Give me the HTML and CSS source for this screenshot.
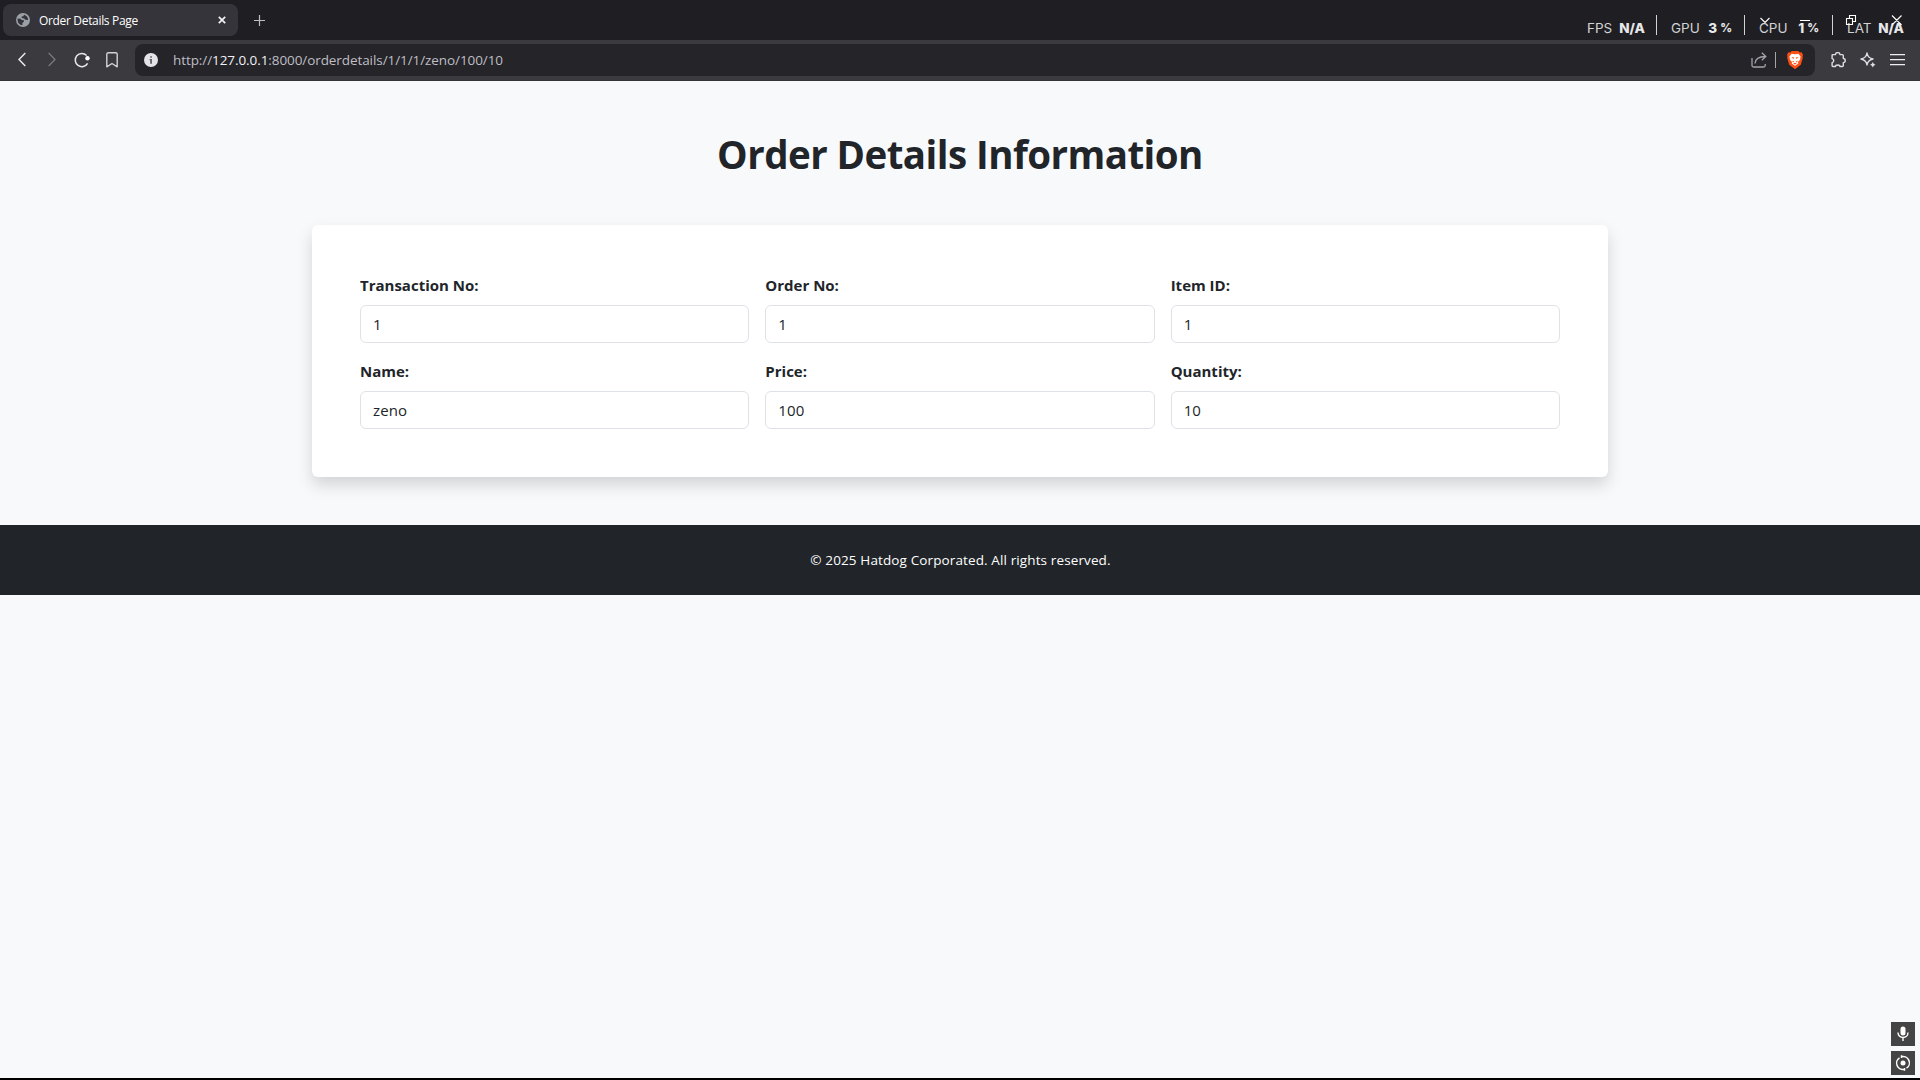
FILE: index.html
```html
<!DOCTYPE html>
<html lang="en">
<head>
<meta charset="utf-8">
<title>Order Details Page</title>
<link rel="stylesheet" href="styles.css">
</head>
<body>
<div class="window">
  <header class="tabstrip">
    <div class="tab">
      <svg class="globe" width="14" height="14" viewBox="0 0 14 14"><circle cx="7" cy="7" r="7" fill="#9aa0a6"/><path d="M1.6 5.6l3 .2 1.200 1.200 2 .3.2 1.500-1.600 1v2.400c-2.700-.2-4.700-2.300-4.800-5zM8 1.700l-.6 1.500-1.800.4.200 1.300 2.300.5 1.200 1.300 2.900.3c-.1-2.700-1.900-4.700-4.200-5.300z" fill="#35343a"/></svg>
      <span class="tab-title">Order Details Page</span>
      <svg class="tab-close" width="8" height="8" viewBox="0 0 8 8"><path d="M.8.8l6.400 6.400M7.200.8L.8 7.200" stroke="#f2f2f4" stroke-width="1.700"/></svg>
    </div>
    <svg class="new-tab" width="11" height="11" viewBox="0 0 11 11"><path d="M5.500 0v11M0 5.500h11" stroke="#bdbcc2" stroke-width="1.200"/></svg>
    <div class="stats">
      <div class="stat fps"><span>FPS</span><b>N/A</b></div>
      <div class="stat gpu"><span>GPU</span><b>3<small>%</small></b></div>
      <div class="stat cpu"><span>CPU</span><b>1<small>%</small></b></div>
      <div class="stat lat"><span>LAT</span><b>N/A</b></div>
    </div>
    <svg class="controls" width="144" height="14" viewBox="0 0 144 14" fill="none" stroke="#fff" stroke-width="1.100"><path d="M.5 5l4.500 4.500L9.500 5M40 7.500h10M86.500 5.500h6v6h-6zM89.500 5.500v-3h6v6h-3M132 2.500l9.500 9.500M141.500 2.500l-9.500 9.500"/></svg>
  </header>
  <nav class="toolbar">
    <div class="nav-icons">
      <svg width="8" height="15" viewBox="0 0 8 15" fill="none" stroke="#e8e7ec" stroke-width="1.500"><path d="M7.300 1L1 7.500 7.300 14"/></svg>
      <svg class="forward" width="8" height="15" viewBox="0 0 8 15" fill="none" stroke="#79787e" stroke-width="1.300"><path d="M.7 1L7 7.500.7 14"/></svg>
      <svg class="reload" width="16" height="16" viewBox="0 0 16 16" fill="none" stroke="#e8e7ec" stroke-width="1.500"><path d="M13.600 11.300A6.600 6.600 0 1 1 12.600 3.500"/><circle cx="13.500" cy="6.200" r="2.200" fill="#fff" stroke="none"/></svg>
      <svg class="bookmark" width="12" height="16" viewBox="0 0 12 16" fill="none" stroke="#d2d1d7" stroke-width="1.400"><path d="M.8 2.300Q.8.800 2.300.8h7.400q1.500 0 1.500 1.500v12.500L6 11.500.8 14.800z" stroke-linejoin="round"/></svg>
    </div>
    <div class="address">
      <svg class="info" width="14" height="14" viewBox="0 0 14 14"><circle cx="7" cy="7" r="7" fill="#e4e3e8"/><path d="M6.200 3.200h1.700v1.600H6.200zM5.600 6h2.300v4.800H6.200V7.200h-.6z" fill="#5a595f"/></svg>
      <span class="url">http://<b>127.0.0.1</b>:8000/orderdetails/1/1/1/zeno/100/10</span>
      <svg width="16" height="16" viewBox="0 0 16 16" fill="none" stroke="#a5a4aa" stroke-width="1.300"><path d="M1 6v7.500q0 1.500 1.500 1.500h10.200q1.500 0 1.500-1.500V12M4 11.500c.3-4.500 3.300-7 10.500-7M10.800.8l4 3.700-4 3.700"/></svg>
      <span class="rule"></span>
      <svg class="brave" width="16" height="18" viewBox="0 0 16 18"><path d="M4.700 0h6.600l1.500 1.500 1.700-.2L16 3.700l-.5 1.500.4 1.300-2.100 7.200L8.600 17.800q-.6.400-1.200 0L2.200 13.700.1 6.500l.4-1.300L0 3.700l1.500-2.400 1.700.2z" fill="#fb4f14"/><path d="M4.500 2.800l3.500.5 3.500-.5 2.200 3-.6 1.400.2 1.400-2.300 2.500.3 1.500L8 14.700l-3.300-2.100.3-1.500-2.300-2.500.2-1.400-.6-1.400z" fill="#fff"/><path d="M4.300 6l2.900.4-.7 1.700zM11.700 6l-2.900.4.700 1.700zM5.200 9.800l2.200.7-1.300 1.100zM10.800 9.800l-2.200.7 1.300 1.100zM6.100 12.500L8 11.700l1.900.8L8 13.500z" fill="#fb4f14"/></svg>
    </div>
    <div class="tools">
      <svg width="16" height="16" viewBox="0 0 16 16" fill="none" stroke="#dedde3" stroke-width="1.400" stroke-linejoin="round"><path d="M3 2.600h2.500a2.200 2 0 0 1 4.400 0h2.500q.9 0 .9.900v3a1.900 2 0 0 1 0 4.100v3q0 .9-.9.900H9.900a2.200 1.500 0 0 0-4.400 0H3q-.9 0-.9-.9v-3a2.100 2.100 0 0 0 0-4.100v-3q0-.9.9-.9z"/></svg>
      <svg width="16" height="16" viewBox="0 0 16 16" fill="none" stroke="#dedde3" stroke-width="1.400" stroke-linejoin="round"><path d="M7 1q.9 5.100 6 6-5.100.9-6 6Q6.100 7.900 1 7q5.100-.9 6-6z"/><path d="M12.800 10q.5 2.200 2.700 2.700-2.200.5-2.700 2.700-.5-2.200-2.700-2.700 2.200-.5 2.700-2.700z" fill="#dedde3"  stroke="none"/></svg>
      <svg width="15" height="12" viewBox="0 0 15 12"><path d="M0 0h15v1.200H0zM0 5h15v1.200H0zM0 10h15v1.200H0z" fill="#efeff2"/></svg>
    </div>
  </nav>
  <main class="page">
    <h1>Order Details Information</h1>
    <form class="card">
      <div class="field"><label>Transaction No:</label><div class="control">1</div></div>
      <div class="field"><label>Order No:</label><div class="control">1</div></div>
      <div class="field"><label>Item ID:</label><div class="control">1</div></div>
      <div class="field"><label>Name:</label><div class="control">zeno</div></div>
      <div class="field"><label>Price:</label><div class="control">100</div></div>
      <div class="field"><label>Quantity:</label><div class="control">10</div></div>
    </form>
  </main>
  <footer class="footer">© 2025 Hatdog Corporated. All rights reserved.</footer>
  <aside class="overlay-buttons">
    <div class="overlay-btn"><svg width="12" height="16" viewBox="0 0 12 16" fill="none" stroke="#fff" stroke-width="1.400"><rect x="3.500" y=".5" width="5" height="9" rx="2.500" fill="#fff" stroke="none"/><path d="M1 6.500c0 6.700 10 6.700 10 0M6 11.800V15"/></svg></div>
    <div class="overlay-btn"><svg width="16" height="16" viewBox="0 0 16 16" fill="none" stroke="#fff" stroke-width="1.500"><circle cx="8" cy="8" r="2.500" fill="#fff" stroke="none"/><path d="M9.500 14.200A6.300 6.300 0 0 1 4.500 2.800M6.500 1.800a6.300 6.300 0 0 1 5 11.400M6.500 .2v2.800M9.500 15.800v-2.800"/></svg></div>
  </aside>
</div>
</body>
</html>
```
FILE: styles.css
```css
* { box-sizing: border-box; }
body { margin: 0; font-family: "Open Sans", "Noto Sans", sans-serif; color: #212529; }
svg { display: block; flex: none; }
.window { position: relative; height: 1080px; overflow: hidden; background: #f8f9fb; border-bottom: 2px solid #000; }

.tabstrip { position: relative; display: flex; align-items: center; height: 40px; padding-left: 3px; background: #1f1e23; }
.tab { display: flex; align-items: center; width: 235px; height: 32px; padding: 0 12px 0 13px; border-radius: 8px; background: #35343a; }
.tab-title { flex: 1; margin-left: 9px; font-size: 12px; letter-spacing: -.33px; color: #fff; }
.new-tab { margin-left: 16px; }
.stats { display: flex; margin: 10px 0 0 auto; font-family: Inter, sans-serif; font-size: 13.5px; line-height: 16px; color: #d2d2d4; }
.stat { display: flex; justify-content: space-between; height: 20px; padding-top: 5px; }
.stat b { display: flex; font-weight: 800; color: #e8e8ea; }
.stat small { margin-left: 3px; font-size: 11.5px; line-height: 16px; letter-spacing: -1px; }
.stat + .stat { border-left: 1px solid #d2d2d4; padding-left: 14px; }
.fps { width: 69px; padding-right: 11px; }
.gpu { width: 88px; padding-right: 13px; }
.cpu { width: 88px; padding-right: 14px; }
.lat { width: 88px; padding-right: 16px; }
.controls { position: absolute; top: 13px; left: 1760px; }

.toolbar { display: flex; align-items: center; height: 41px; padding-bottom: 1px; background: #3b3a3f; border-bottom: 1px solid #343338; }
.nav-icons { display: flex; align-items: center; margin-left: 18px; }
.forward { margin-left: 22px; }
.reload { margin-left: 18px; }
.bookmark { margin-left: 16px; }
.address { display: flex; align-items: center; width: 1680px; height: 32px; margin-left: 17px; padding: 0 12px 0 9px; border-radius: 8px; background: #252429; }
.url { flex: 1; margin-left: 15px; font-size: 13.5px; letter-spacing: -.08px; color: #bfbec4; }
.url b { font-weight: 400; color: #f2f1f5; }
.rule { width: 1px; height: 16px; margin: 0 11px 0 8px; background: #a5a4aa; }
.tools { display: flex; align-items: center; justify-content: space-between; width: 75px; margin-left: 15px; }

.page { width: 1296px; margin: 0 auto; padding: 49px 0 48px; }
h1 { margin: 0 0 47px; font-size: 38.5px; line-height: 48px; letter-spacing: -.55px; text-align: center; }
.card { display: grid; grid-template-columns: repeat(3, 1fr); gap: 16px; padding: 48px; border-radius: 6px; background: #fff; box-shadow: 0 8px 16px rgba(0, 0, 0, .15); }
.field label { display: block; margin-bottom: 8px; font-size: 15px; font-weight: 700; line-height: 24px; }
.control { height: 38px; padding: 0 12px; border: 1px solid #dee2e6; border-radius: 6px; font-size: 15px; line-height: 37px; letter-spacing: .1px; }
.footer { height: 70px; padding-left: 1px; background: #212529; color: #fff; font-size: 13.5px; line-height: 70px; letter-spacing: .12px; text-align: center; }

.overlay-buttons { position: absolute; right: 5px; bottom: 3px; display: grid; gap: 5px; }
.overlay-btn { display: grid; place-items: center; width: 24px; height: 24px; background: #444; }
```
